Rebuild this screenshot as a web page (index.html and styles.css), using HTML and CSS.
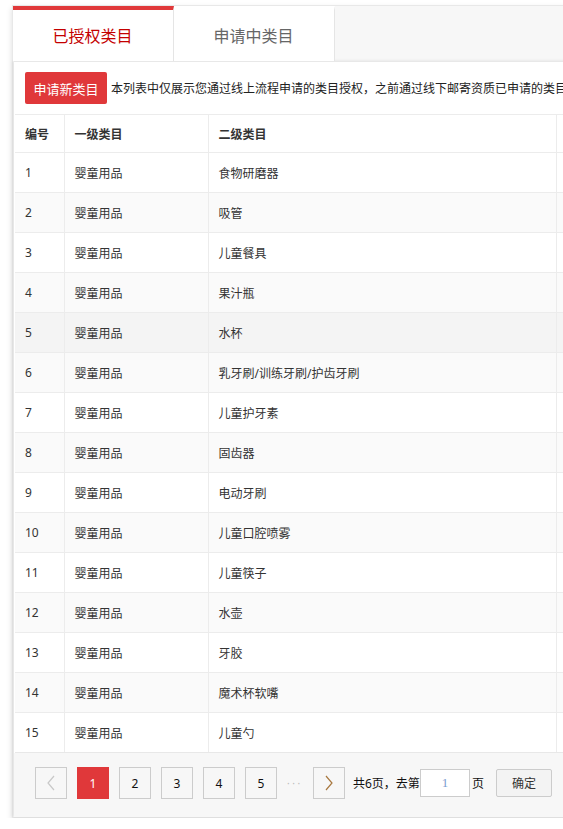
FILE: index.html
```html
<!DOCTYPE html>
<html lang="zh-CN">
<head>
<meta charset="utf-8">
<title>类目授权</title>
<link rel="stylesheet" href="styles.css">
</head>
<body>
<div class="wrap">
  <div class="tabs">
    <div class="tab active">已授权类目</div>
    <div class="tab">申请中类目</div>
  </div>
  <div class="panel">
    <div class="toolbar">
      <button class="btn-primary">申请新类目</button>
      <span class="tip">本列表中仅展示您通过线上流程申请的类目授权，之前通过线下邮寄资质已申请的类目授权请联系客服查询</span>
    </div>
    <table class="grid">
      <colgroup>
        <col class="c1"><col class="c2"><col class="c3"><col class="c4">
      </colgroup>
      <thead>
        <tr><th>编号</th><th>一级类目</th><th>二级类目</th><th></th></tr>
      </thead>
      <tbody>
        <tr><td>1</td><td>婴童用品</td><td>食物研磨器</td><td></td></tr>
        <tr><td>2</td><td>婴童用品</td><td>吸管</td><td></td></tr>
        <tr><td>3</td><td>婴童用品</td><td>儿童餐具</td><td></td></tr>
        <tr><td>4</td><td>婴童用品</td><td>果汁瓶</td><td></td></tr>
        <tr class="hover"><td>5</td><td>婴童用品</td><td>水杯</td><td></td></tr>
        <tr><td>6</td><td>婴童用品</td><td>乳牙刷/训练牙刷/护齿牙刷</td><td></td></tr>
        <tr><td>7</td><td>婴童用品</td><td>儿童护牙素</td><td></td></tr>
        <tr><td>8</td><td>婴童用品</td><td>固齿器</td><td></td></tr>
        <tr><td>9</td><td>婴童用品</td><td>电动牙刷</td><td></td></tr>
        <tr><td>10</td><td>婴童用品</td><td>儿童口腔喷雾</td><td></td></tr>
        <tr><td>11</td><td>婴童用品</td><td>儿童筷子</td><td></td></tr>
        <tr><td>12</td><td>婴童用品</td><td>水壶</td><td></td></tr>
        <tr><td>13</td><td>婴童用品</td><td>牙胶</td><td></td></tr>
        <tr><td>14</td><td>婴童用品</td><td>魔术杯软嘴</td><td></td></tr>
        <tr><td>15</td><td>婴童用品</td><td>儿童勺</td><td></td></tr>
      </tbody>
    </table>
    <div class="pager">
      <span class="pg disabled"><svg width="10" height="16" viewBox="0 0 10 16"><polyline points="8,1 2,8 8,15" fill="none" stroke="#c8c8c8" stroke-width="1.2"/></svg></span>
      <span class="pg current">1</span>
      <span class="pg">2</span>
      <span class="pg">3</span>
      <span class="pg">4</span>
      <span class="pg">5</span>
      <span class="dots">· · ·</span>
      <span class="pg"><svg width="10" height="16" viewBox="0 0 10 16"><polyline points="2,1 8,8 2,15" fill="none" stroke="#a8783f" stroke-width="1.2"/></svg></span>
      <span class="total">共6页，去第</span>
      <input class="goto" type="text" value="1">
      <span class="unit">页</span>
      <button class="btn-ok">确定</button>
    </div>
  </div>
</div>
</body>
</html>
```

FILE: styles.css
```css
html, body {
  margin: 0;
  padding: 0;
  overflow: hidden;
  background: #fff;
}
body {
  font-family: "Noto Sans", "Noto Sans CJK SC", sans-serif;
  font-size: 12px;
  color: #333;
}
.wrap {
  margin: 5px 0 0 12px;
  width: 820px;
  border: 1px solid #e8e8e8;
  border-right: none;
  box-shadow: 0 3px 6px rgba(0, 0, 0, 0.14);
  background: #f7f7f7;
}
.tabs {
  display: flex;
  height: 55px;
  background: #f7f7f7;
}
.tab {
  box-sizing: border-box;
  width: 161px;
  height: 55px;
  border-top: 4px solid transparent;
  border-right: 1px solid #e5e5e5;
  background: #fff;
  font-size: 16px;
  color: #666;
  display: flex;
  align-items: center;
  justify-content: center;
  padding-bottom: 2px;
  padding-right: 1px;
}
.tab.active {
  border-top-color: #e0383a;
  color: #c40000;
}
.panel {
  margin-left: 1px;
  background: #fff;
  border-top: 1px solid #e8e8e8;
  box-shadow: -1px 0 3px rgba(0, 0, 0, 0.1);
}
.toolbar {
  display: flex;
  align-items: center;
  gap: 4px;
  padding: 10px 10px 10px 11px;
  white-space: nowrap;
}
.btn-primary {
  width: 82px;
  height: 32px;
  border: none;
  border-radius: 2px;
  background: #e0383a;
  color: #fff;
  font-family: inherit;
  font-size: 13px;
  padding: 0;
  flex: none;
}
.tip {
  font-size: 12px;
  color: #222;
}
.grid {
  margin-left: 1px;
  border-collapse: collapse;
  table-layout: fixed;
  width: 800px;
}
.c1 { width: 49px; }
.c2 { width: 144px; }
.c3 { width: 348px; }
.c4 { width: 259px; }
.grid th,
.grid td {
  border: 1px solid #ececec;
  text-align: left;
  padding: 0 10px;
  font-size: 12px;
  color: #333;
  white-space: nowrap;
}
.grid th {
  height: 37px;
  font-weight: bold;
  color: #333;
}
.grid td {
  height: 39px;
}
.grid thead tr { background: #fff; }
.grid tbody tr:nth-child(even) { background: #fafafa; }
.grid tbody tr.hover { background: #f4f4f4; }
.grid th:first-child,
.grid td:first-child { border-left: none; }
.grid tbody tr:last-child td { border-bottom: 1px solid #e8e8e8; }
.pager {
  display: flex;
  align-items: center;
  gap: 10px;
  padding: 14px 0 18px 21px;
  background: #f7f7f7;
}
.pg {
  box-sizing: border-box;
  width: 32px;
  height: 32px;
  border: 1px solid #ccc;
  background: #f7f7f7;
  display: flex;
  align-items: center;
  justify-content: center;
  font-family: "Noto Sans", sans-serif;
  font-size: 12px;
  color: #111;
}
.pg.current {
  background: #e0383a;
  border-color: #e0383a;
  color: #fff;
}
.dots {
  width: 16px;
  color: #bbb;
  font-size: 10px;
  white-space: nowrap;
  overflow: hidden;
}
.total {
  margin-left: -2px;
  color: #111;
}
.goto {
  box-sizing: border-box;
  width: 50px;
  height: 28px;
  margin-left: -10px;
  border: 1px solid #ccc;
  background: #fff;
  text-align: center;
  font-family: "Liberation Serif", serif;
  font-size: 13px;
  color: #7a9ccf;
  padding: 0;
}
.unit {
  margin-left: -8px;
  color: #111;
}
.btn-ok {
  box-sizing: border-box;
  width: 56px;
  height: 28px;
  margin-left: 2px;
  border: 1px solid #ccc;
  border-radius: 2px;
  background: #f3f3f3;
  font-family: inherit;
  font-size: 12px;
  color: #333;
  padding: 0;
}
```
